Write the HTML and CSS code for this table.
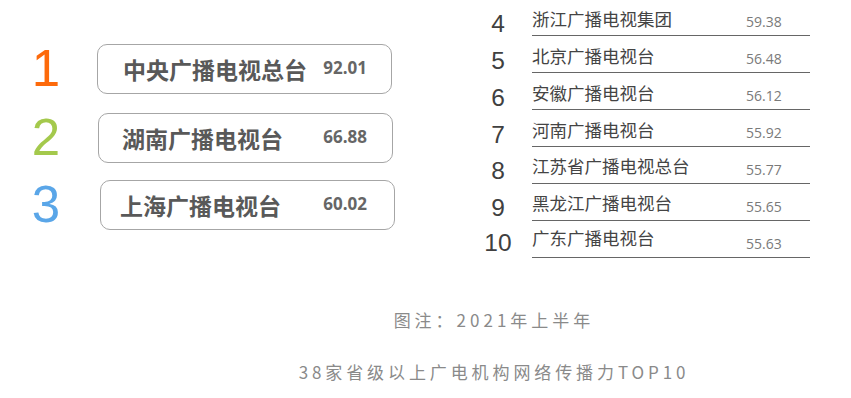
FILE: index.html
```html
<!DOCTYPE html>
<html lang="zh-CN">
<head>
<meta charset="utf-8">
<title>网络传播力TOP10</title>
<link rel="stylesheet" href="styles.css">
</head>
<body>
<div class="page">
  <div class="top">
    <div class="left">
      <div class="big-row r1">
        <div class="big-num c1">1</div>
        <div class="box"><span class="bname">中央广播电视总台</span><span class="bval">92.01</span></div>
      </div>
      <div class="big-row r2">
        <div class="big-num c2">2</div>
        <div class="box"><span class="bname">湖南广播电视台</span><span class="bval">66.88</span></div>
      </div>
      <div class="big-row r3">
        <div class="big-num c3">3</div>
        <div class="box"><span class="bname">上海广播电视台</span><span class="bval">60.02</span></div>
      </div>
    </div>
    <div class="right">
      <div class="row"><div class="num">4</div><div class="line"><span class="name">浙江广播电视集团</span><span class="val">59.38</span></div></div>
      <div class="row"><div class="num">5</div><div class="line"><span class="name">北京广播电视台</span><span class="val">56.48</span></div></div>
      <div class="row"><div class="num">6</div><div class="line"><span class="name">安徽广播电视台</span><span class="val">56.12</span></div></div>
      <div class="row"><div class="num">7</div><div class="line"><span class="name">河南广播电视台</span><span class="val">55.92</span></div></div>
      <div class="row up1"><div class="num">8</div><div class="line"><span class="name">江苏省广播电视总台</span><span class="val">55.77</span></div></div>
      <div class="row up1"><div class="num">9</div><div class="line"><span class="name">黑龙江广播电视台</span><span class="val">55.65</span></div></div>
      <div class="row up2"><div class="num">10</div><div class="line"><span class="name">广东广播电视台</span><span class="val">55.63</span></div></div>
    </div>
  </div>
  <div class="captions">
    <p class="cap cap1">图注：2021年上半年</p>
    <p class="cap cap2">38家省级以上广电机构网络传播力TOP10</p>
  </div>
</div>
</body>
</html>
```

FILE: styles.css
```css
html, body {
  margin: 0;
  padding: 0;
  background: #ffffff;
}
body {
  width: 851px;
  height: 398px;
  overflow: hidden;
  font-family: "Noto Sans CJK SC", "Noto Sans", sans-serif;
}
.page {
  display: flex;
  flex-direction: column;
}
.top {
  display: flex;
  height: 286px;
}
.left {
  width: 478px;
  padding: 44px 0 0 20px;
  box-sizing: border-box;
  display: flex;
  flex-direction: column;
}
.big-row {
  display: flex;
  align-items: center;
  height: 50px;
}
.big-row.r1 { margin-bottom: 19px; }
.big-row.r2 { margin-bottom: 17px; }
.big-num {
  width: 52px;
  margin-right: 25px;
  text-align: center;
  font-family: "Liberation Sans", Arial, sans-serif;
  font-size: 51px;
  line-height: 50px;
}
.c1 { color: #fd6a0b; }
.c2 { color: #a4c94c; }
.c3 { color: #5aa6e8; }
.box {
  width: 295px;
  height: 50px;
  box-sizing: border-box;
  border: 1px solid #a6a6a6;
  border-radius: 10px;
  display: flex;
  align-items: center;
  justify-content: space-between;
  padding: 0 24px 0 25px;
  color: #595959;
}
.r2 .box { margin-left: 1px; padding-left: 23px; padding-right: 25px; }
.r3 .box { margin-left: 3px; padding-left: 19px; padding-right: 27px; }
.bname {
  font-size: 23px;
  font-weight: 700;
  line-height: 30px;
}
.bval {
  font-family: "Open Sans", "Noto Sans", sans-serif;
  font-size: 17px;
  font-weight: 700;
  color: #666666;
  line-height: 24px;
  margin-top: -3px;
}
.right {
  margin-top: -1px;
  display: flex;
  flex-direction: column;
}
.row {
  display: flex;
  height: 37px;
}
.num {
  width: 40px;
  margin-right: 14px;
  display: flex;
  align-items: flex-end;
  justify-content: center;
  font-family: "Liberation Sans", Arial, sans-serif;
  font-size: 24.5px;
  line-height: 24px;
  color: #404040;
}
.line {
  width: 278px;
  box-sizing: border-box;
  border-bottom: 1px solid #666666;
  display: flex;
  align-items: flex-end;
}
.name {
  width: 214px;
  font-size: 17.5px;
  line-height: 24px;
  color: #444444;
  padding-bottom: 4px;
}
.val {
  font-family: "Open Sans", "Noto Sans", sans-serif;
  font-size: 14px;
  line-height: 24px;
  color: #7a7a7a;
  padding-bottom: 1px;
}
.up1 .name { padding-bottom: 5px; }
.up1 .num { padding-bottom: 1px; }
.up2 .name { padding-bottom: 7px; }
.up2 .num { padding-bottom: 3px; }
.up2 .val { padding-bottom: 1px; }
.captions {
  padding-left: 137px;
  text-align: center;
  color: #8a8a8a;
}
.cap {
  margin: 0;
  font-size: 17px;
  line-height: 24px;
}
.cap1 {
  letter-spacing: 4px;
  margin-top: 22px;
}
.cap2 {
  letter-spacing: 3.9px;
  margin-top: 28px;
}
```
